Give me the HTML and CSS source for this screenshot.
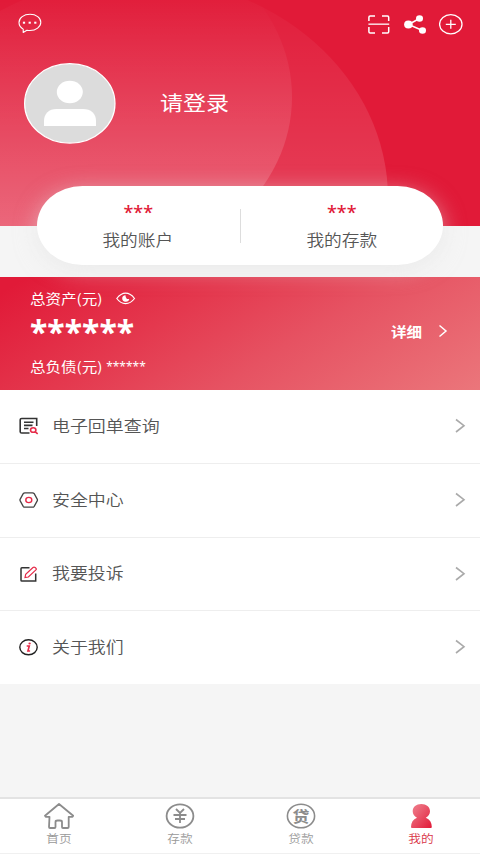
FILE: index.html
```html
<!DOCTYPE html>
<html lang="zh-CN">
<head>
<meta charset="utf-8">
<title>我的</title>
<link rel="stylesheet" href="styles.css">
</head>
<body>
<div class="app">
  <header class="hero">
    <svg class="hero-bg" width="480" height="226" viewBox="0 0 480 226">
      <defs>
        <linearGradient id="outer" gradientUnits="userSpaceOnUse" x1="0" y1="0" x2="0" y2="226"><stop offset="0" stop-color="#fff" stop-opacity=".02"/><stop offset="1" stop-color="#fff" stop-opacity=".17"/></linearGradient>
        <linearGradient id="inner" gradientUnits="userSpaceOnUse" x1="0" y1="0" x2="0" y2="226"><stop offset="0" stop-color="#fff" stop-opacity="0"/><stop offset="1" stop-color="#fff" stop-opacity=".2"/></linearGradient>
      </defs>
      <ellipse cx="135" cy="198" rx="253" ry="221" fill="url(#outer)"/>
      <ellipse cx="97" cy="97" rx="195" ry="170" fill="url(#inner)"/>
    </svg>
    <div class="toolbar">
      <svg width="24" height="20" viewBox="0 0 24 20" fill="none" stroke="#fff" stroke-width="1.1"><path d="M5.2 16.1C2.500 14.500 1 12.100 1 9.500c0-4.600 4.800-8.200 11-8.200S22.800 4.800 22.800 9.300 18 17.500 12 17.500c-1.100 0-2.100-.1-3.100-.3L5.200 19.500z" stroke-linejoin="round"/><g fill="#fff" stroke="none"><rect x="4.900" y="8.700" width="2.200" height="2"/><rect x="10.600" y="8.700" width="2.200" height="2"/><rect x="16.200" y="8.700" width="2.200" height="2"/></g></svg>
      <div class="actions">
        <svg width="22" height="19" viewBox="0 0 22 19" fill="none" stroke="#fff" stroke-width="1.500"><path d="M.9 6V2.200Q.9 1 2.200 1H7M14 1h5.500q1.200 0 1.200 1.200V6M.9 12v4.700q0 1.200 1.300 1.200H7M14 17.900h5.500q1.200 0 1.200-1.200V12"/><path d="M.4 9.200H21.200" stroke-width="1.600" stroke-opacity=".8"/></svg>
        <svg width="23" height="19" viewBox="0 0 23 19" fill="#fff"><path d="M16.500 3.500L5.500 9.500l14 6" fill="none" stroke="#fff" stroke-width="1.500"/><ellipse cx="5.400" cy="9.500" rx="4.300" ry="3.900"/><ellipse cx="16.500" cy="3.500" rx="3.500" ry="3.200"/><ellipse cx="19.500" cy="15.500" rx="3.500" ry="3.200"/></svg>
        <svg width="24" height="21" viewBox="0 0 24 21" fill="none" stroke="#fff" stroke-width="1.300"><ellipse cx="11.800" cy="10.300" rx="11.200" ry="9.600"/><path d="M6.800 10.300h10M11.800 5.800v9"/></svg>
      </div>
    </div>
    <div class="profile">
      <svg width="92" height="81" viewBox="0 0 92 81"><ellipse cx="45.800" cy="40.400" rx="45.200" ry="39.700" fill="#dcdcdc" stroke="#fff" stroke-width="1.200"/><ellipse cx="45.800" cy="29" rx="13" ry="11.300" fill="#fff"/><path d="M20 63V58c0-7.500 5-12 12.500-12h26.500C67 46 72 50.500 72 58v5z" fill="#fff"/></svg>
      <span class="login wide">请登录</span>
    </div>
  </header>

  <section class="card">
    <div class="card-item"><b class="stars">***</b><span class="label wide">我的账户</span></div>
    <div class="divider"></div>
    <div class="card-item"><b class="stars">***</b><span class="label wide">我的存款</span></div>
  </section>

  <section class="assets">
    <div class="summary">
      <div class="asset-title"><span class="caption wide">总资产(元)</span>
        <svg width="20" height="13" viewBox="0 0 20 13" fill="none" stroke="#fff" stroke-width="1.200"><path d="M.8 6.500C4 2.500 6.200 1.200 9.500 1.200s6 1.300 9 5.300c-3 4-5.700 5.100-9 5.100S3.800 10.500.8 6.500z"/><path d="M9.500 3.300A3.500 3.200 0 1 0 13.200 6.900L10.900 7Q9.300 5.500 9.500 3.300z" fill="#fff" stroke="none"/></svg>
      </div>
      <div class="total">******</div>
      <div class="debt"><span class="caption wide">总负债(元)</span><span class="debt-stars">******</span></div>
    </div>
    <div class="detail"><b class="wide">详细</b><svg width="10" height="14" viewBox="0 0 10 14" fill="none" stroke="#fff" stroke-width="1.500"><path d="M1.500 1.500L8 7l-6.500 5.500"/></svg></div>
  </section>

  <nav class="menu">
    <div class="row">
      <svg width="20" height="18" viewBox="0 0 20 18" fill="none" stroke="#333" stroke-width="1.600"><path d="M10.500 16H2.700Q1.200 16 1.200 14.700V2.800Q1.200 1.500 2.700 1.500H17.700V9M5 5.300h9.500M5 8.400h8.500M5 11.500h4.500"/><g stroke="#e52b49"><ellipse cx="14.200" cy="13" rx="2.700" ry="2.300"/><path d="M16 14.700l2.700 2.200"/></g></svg>
      <span class="row-text wide">电子回单查询</span>
      <svg class="arrow" width="12" height="15" viewBox="0 0 12 15"><path d="M2 1.500L10 7.700 2 14"/></svg>
    </div>
    <div class="row">
      <svg width="20" height="18" viewBox="0 0 20 18" fill="none" stroke="#444" stroke-width="1.300"><path d="M6 1.800h7.400Q14.600 1.800 15.200 2.700L18.200 8.100Q18.700 9 18.200 9.900L15.200 15.300Q14.600 16.200 13.400 16.200H6Q4.800 16.200 4.200 15.300L1.200 9.900Q.7 9 1.200 8.100L4.200 2.700Q4.800 1.800 6 1.800z"/><ellipse cx="9.800" cy="9" rx="3" ry="2.600" stroke="#e52b49" stroke-width="1.400"/></svg>
      <span class="row-text wide">安全中心</span>
      <svg class="arrow" width="12" height="15" viewBox="0 0 12 15"><path d="M2 1.500L10 7.700 2 14"/></svg>
    </div>
    <div class="row">
      <svg width="20" height="18" viewBox="0 0 20 18" fill="none" stroke="#333" stroke-width="1.500"><path d="M10.500 2.800H2.900Q2 2.800 2 3.700V15.200Q2 16 2.900 16H16.700V8.500"/><path d="M6 12.500L6.700 9.200 14 2.500q1-.9 2.100 0l.8.700q.9.900 0 1.700L9.400 12z" stroke="#e52b49" stroke-width="1.200"/></svg>
      <span class="row-text wide">我要投诉</span>
      <svg class="arrow" width="12" height="15" viewBox="0 0 12 15"><path d="M2 1.500L10 7.700 2 14"/></svg>
    </div>
    <div class="row">
      <svg width="20" height="18" viewBox="0 0 20 18" fill="none"><ellipse cx="9.500" cy="9.300" rx="8.700" ry="7.500" stroke="#222" stroke-width="1.400"/><path d="M7.700 8h2.600L8.900 13h2.200" stroke="#e52b49" stroke-width="1.600"/><ellipse cx="10.600" cy="5.400" rx="1.200" ry="1" fill="#e52b49"/></svg>
      <span class="row-text wide">关于我们</span>
      <svg class="arrow" width="12" height="15" viewBox="0 0 12 15"><path d="M2 1.500L10 7.700 2 14"/></svg>
    </div>
  </nav>

  <footer class="tabs">
    <div class="tab">
      <svg width="30" height="26" viewBox="0 0 30 26" fill="none" stroke="#8c8c8c" stroke-width="1.800" stroke-linejoin="round"><path d="M15 1L1 12.800l.7 1h3.800L5 24q0 1 1 1h4.500q1 0 1-1v-5q0-1.500 2-1.500h2.500q2 0 2 1.500v5q0 1 1 1h4.500q1.200 0 1.200-1V13.800H28.500l.7-1z"/></svg>
      <span class="wide">首页</span>
    </div>
    <div class="tab">
      <svg width="30" height="26" viewBox="0 0 30 26" fill="none" stroke="#8c8c8c" stroke-width="1.800"><ellipse cx="15" cy="13" rx="13.400" ry="11.700"/><path d="M11 6l4 4 4-4M8.500 12h13M10 16h10M15 10v10"/></svg>
      <span class="wide">存款</span>
    </div>
    <div class="tab">
      <svg width="30" height="26" viewBox="0 0 30 26" fill="none" stroke="#8c8c8c" stroke-width="1.600"><ellipse cx="15" cy="13" rx="13.600" ry="11.800"/><text class="loan-char" x="13.300" y="18.700" text-anchor="middle" transform="scale(1.13 1)">贷</text></svg>
      <span class="wide">贷款</span>
    </div>
    <div class="tab active">
      <svg width="30" height="26" viewBox="0 0 30 26"><defs><linearGradient id="person" x1="0" y1="0" x2="1" y2="1"><stop offset=".2" stop-color="#ed7080"/><stop offset="1" stop-color="#e11a38"/></linearGradient></defs><path d="M15.300 1c5 0 8.700 3 8.700 7.300 0 3-1.600 5-4.200 6.500 4 1.700 6 4.800 6 9.200q0 1-1 1H6q-1 0-1-1c0-4.400 2-7.500 6-9.200C8.300 13.300 6.700 11.300 6.700 8.300 6.700 4 10.300 1 15.300 1z" fill="url(#person)"/></svg>
      <span class="wide">我的</span>
    </div>
  </footer>
</div>
</body>
</html>
```
FILE: styles.css
```css
* { box-sizing: border-box; }
body {
  margin: 0;
  background: #f5f5f5;
  color: #555;
  font-family: "Noto Sans CJK SC", sans-serif;
  font-weight: 350;
}
svg { display: block; flex: none; }
.app {
  width: 480px;
  height: 854px;
  display: flex;
  flex-direction: column;
  overflow: hidden;
}
.wide {
  display: inline-block;
  transform: scaleX(1.15);
  transform-origin: left center;
  white-space: nowrap;
}
.hero {
  position: relative;
  flex: none;
  height: 226px;
  padding: 13px 17px 0 18px;
  background: #e11a38;
}
.hero-bg { position: absolute; left: 0; top: 0; }
.toolbar { position: relative; display: flex; justify-content: space-between; height: 50px; }
.actions { display: flex; gap: 13px; height: 22px; align-items: center; }
.profile { position: relative; display: flex; align-items: center; margin-left: 6px; gap: 44px; }
.login { font-size: 20px; font-weight: 400; line-height: 30px; padding-bottom: 2px; color: #fff; }
.card {
  position: relative;
  flex: none;
  display: flex;
  align-items: center;
  width: 406px;
  height: 79px;
  margin: -40px 0 0 37px;
  background: #fff;
  border-radius: 46px / 40px;
  box-shadow: 0 5px 22px rgba(225, 225, 225, .55);
}
.card-item { flex: 1; display: flex; flex-direction: column; align-items: center; }
.stars { font: 500 18px/26px "Noto Sans", sans-serif; color: #e11a38; margin-top: -4px; padding-top: 2px; }
.label { font-size: 15.400px; line-height: 24px; margin-top: 2px; margin-bottom: -1px; transform-origin: center; }
.divider { width: 1px; height: 34px; background: #ddd; }
.assets {
  flex: none;
  height: 113px;
  margin-top: 12px;
  padding: 11px 32px 0 30px;
  display: flex;
  justify-content: space-between;
  color: #fff;
  background: linear-gradient(148deg, #e11a38 4%, #e4384e 35%, #e65262 60%, #eb767b 100%);
}
.asset-title, .debt { display: flex; align-items: center; height: 20px; }
.asset-title { gap: 23px; }
.caption { font-size: 13.500px; font-weight: 400; line-height: 20px; }
.total { font: 700 32px/36px "Noto Sans", sans-serif; height: 48px; padding-top: 6px; }
.debt { gap: 13px; }
.debt-stars { font: 400 12px/20px "Noto Sans", sans-serif; padding-top: 2px; }
.detail { display: flex; gap: 20px; align-items: center; height: 20px; margin-top: 33px; font-size: 13.500px; }
.detail .wide { padding-bottom: 1px; font-weight: 700; }
.menu { flex: none; background: #fff; height: 294px; display: grid; grid-template-rows: 74px 74px 73px 73px; }
.row { display: flex; align-items: center; padding: 0 14px 2px 19px; border-bottom: 1px solid #eee; }
.row > svg:first-child { margin-top: 1px; }
.row:last-child { border-bottom: 0; }
.row-text { margin-left: 13px; padding-bottom: 2px; font-size: 15.600px; line-height: 24px; }
.arrow { margin-left: auto; fill: none; stroke: #aaa; stroke-width: 1.600; }
.tabs {
  flex: none;
  display: flex;
  margin-top: auto;
  height: 57px;
  border-top: 2px solid #e3e3e3;
  border-bottom: 1px solid #f0f0f0;
  background: #fff;
}
.tab { flex: none; width: 120.700px; padding: 4px 2px 0 0; display: flex; flex-direction: column; align-items: center; color: #999; font-size: 11px; line-height: 18px; }
.tab .wide { transform-origin: center; }
.tab.active { color: #d93446; }
.loan-char { font-size: 15px; font-weight: 700; fill: #8c8c8c; stroke: none; }
```
